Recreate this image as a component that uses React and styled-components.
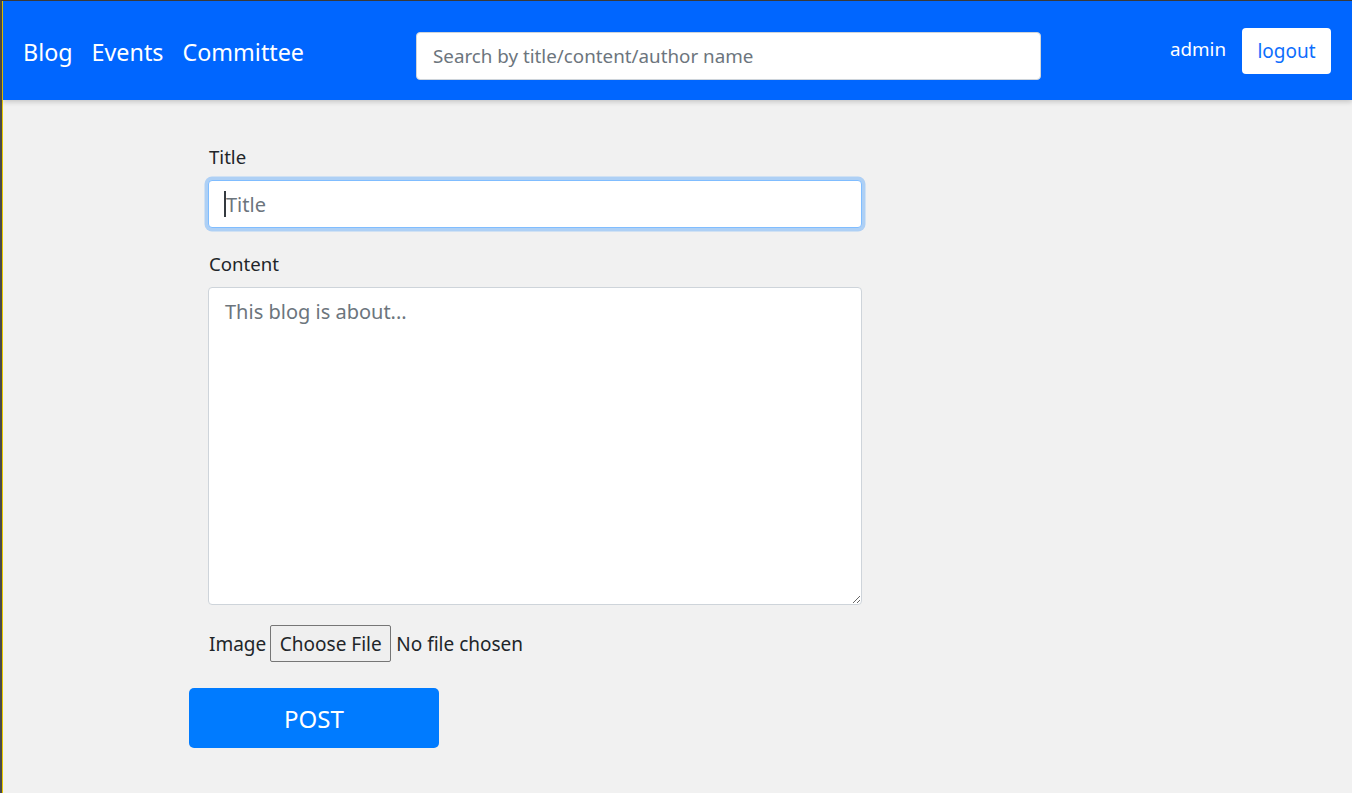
import React from 'react'
import styled, { createGlobalStyle } from 'styled-components'

const GlobalStyle = createGlobalStyle`
  * { box-sizing: border-box; }
  html, body { margin: 0; padding: 0; }
  body {
    font-family: "Noto Sans", "Open Sans", sans-serif;
    background: #f1f1f1;
    color: #212529;
  }
`

const Frame = styled.div`
  min-height: 793px;
  border-top: 1px solid #3b3b3b;
  border-left: 2px solid #4a4a4a;
  background: #f1f1f1;
`

const Inner = styled.div`
  min-height: 792px;
  border-left: 1px solid #e8c900;
`

const Navbar = styled.nav`
  height: 99px;
  background: #0066ff;
  display: flex;
  align-items: center;
  padding: 0 21px 0 20px;
  box-shadow: 0 2px 5px rgba(0, 0, 0, 0.18);
  position: relative;
`

const NavLinks = styled.div`
  display: flex;
  gap: 19px;
  margin-top: 2px;
`

const NavLink = styled.a`
  color: #fff;
  font-size: 23.3px;
  line-height: 32px;
  text-decoration: none;
  cursor: pointer;
`

const Search = styled.input`
  width: 625px;
  height: 48px;
  margin-left: 112px;
  margin-top: 11px;
  padding: 0 16px;
  border: 1px solid #ced4da;
  border-radius: 4px;
  font-family: inherit;
  font-size: 18.8px;
  color: #495057;
  background: #fff;
  outline: none;

  &::placeholder {
    color: #6c757d;
  }
`

const UserBox = styled.div`
  margin-left: auto;
  display: flex;
  align-items: center;
  gap: 16px;
`

const UserName = styled.span`
  color: #fff;
  font-size: 18.8px;
  line-height: 28px;
  margin-top: -3px;
`

const LogoutButton = styled.button`
  height: 46px;
  width: 89px;
  padding: 0;
  background: #fff;
  color: #0d6efd;
  border: none;
  border-radius: 4px;
  font-family: inherit;
  font-size: 19px;
  cursor: pointer;
`

const Main = styled.main`
  padding: 43px 0 40px 186px;
`

const Form = styled.form`
  display: flex;
  flex-direction: column;
`

const Fields = styled.div`
  width: 673px;
  padding-left: 19px;
`

const Group = styled.div`
  margin-bottom: ${(p) => p.gap || 22}px;
`

const Label = styled.label`
  display: block;
  font-size: 18.6px;
  line-height: 27px;
  margin-bottom: 10px;
  padding-left: 1px;
  color: #212529;
`

const InputWrap = styled.div`
  position: relative;
`

const Caret = styled.span`
  position: absolute;
  left: 16px;
  top: 11px;
  width: 2px;
  height: 26px;
  background: #343a40;
`

const TextInput = styled.input`
  display: block;
  width: 100%;
  height: 48px;
  padding: 0 16px 0 17px;
  font-family: inherit;
  font-size: 20px;
  color: #495057;
  background: #fff;
  border: 1px solid ${(p) => (p.$focused ? '#80bdff' : '#ced4da')};
  border-radius: 4px;
  box-shadow: ${(p) => (p.$focused ? '0 0 0 3.5px rgba(0, 123, 255, 0.28)' : 'none')};
  outline: none;

  &::placeholder {
    color: #6c757d;
  }
`

const TextArea = styled.textarea`
  display: block;
  width: 100%;
  height: 318px;
  padding: 9px 16px;
  font-family: inherit;
  font-size: 20px;
  line-height: 30px;
  color: #495057;
  background: #fff;
  border: 1px solid #ced4da;
  border-radius: 4px;
  outline: none;

  &::placeholder {
    color: #6c757d;
  }
`

const FileRow = styled.div`
  display: flex;
  align-items: center;
  gap: 4px;
  height: 37px;
  padding-left: 1px;
  font-size: 19px;
`

const FileInput = styled.input`
  font-family: inherit;
  font-size: 19px;
  color: #212529;

  &::file-selector-button {
    font-family: inherit;
    font-size: 19px;
    height: 37px;
    width: 121px;
    padding: 0;
    margin-right: 5px;
    background: #efefef;
    border: 1px solid #767676;
    border-radius: 2px;
    color: #212529;
  }
`

const PostButton = styled.button`
  width: 250px;
  height: 60px;
  margin-top: 26px;
  background: #007bff;
  color: #fff;
  border: none;
  border-radius: 5px;
  font-family: inherit;
  font-size: 24px;
  cursor: pointer;
`

function App() {
  return (
    <>
      <GlobalStyle />
      <Frame>
        <Inner>
          <Navbar>
            <NavLinks>
              <NavLink>Blog</NavLink>
              <NavLink>Events</NavLink>
              <NavLink>Committee</NavLink>
            </NavLinks>
            <Search placeholder="Search by title/content/author name" />
            <UserBox>
              <UserName>admin</UserName>
              <LogoutButton>logout</LogoutButton>
            </UserBox>
          </Navbar>

          <Main>
            <Form onSubmit={(e) => e.preventDefault()}>
              <Fields>
                <Group>
                  <Label htmlFor="title">Title</Label>
                  <InputWrap>
                    <TextInput id="title" placeholder="Title" $focused />
                    <Caret />
                  </InputWrap>
                </Group>
                <Group gap={20}>
                  <Label htmlFor="content">Content</Label>
                  <TextArea id="content" placeholder="This blog is about..." />
                </Group>
                <FileRow>
                  <span>Image</span>
                  <FileInput type="file" />
                </FileRow>
              </Fields>
              <div>
                <PostButton type="submit">POST</PostButton>
              </div>
            </Form>
          </Main>
        </Inner>
      </Frame>
    </>
  )
}

export default App
